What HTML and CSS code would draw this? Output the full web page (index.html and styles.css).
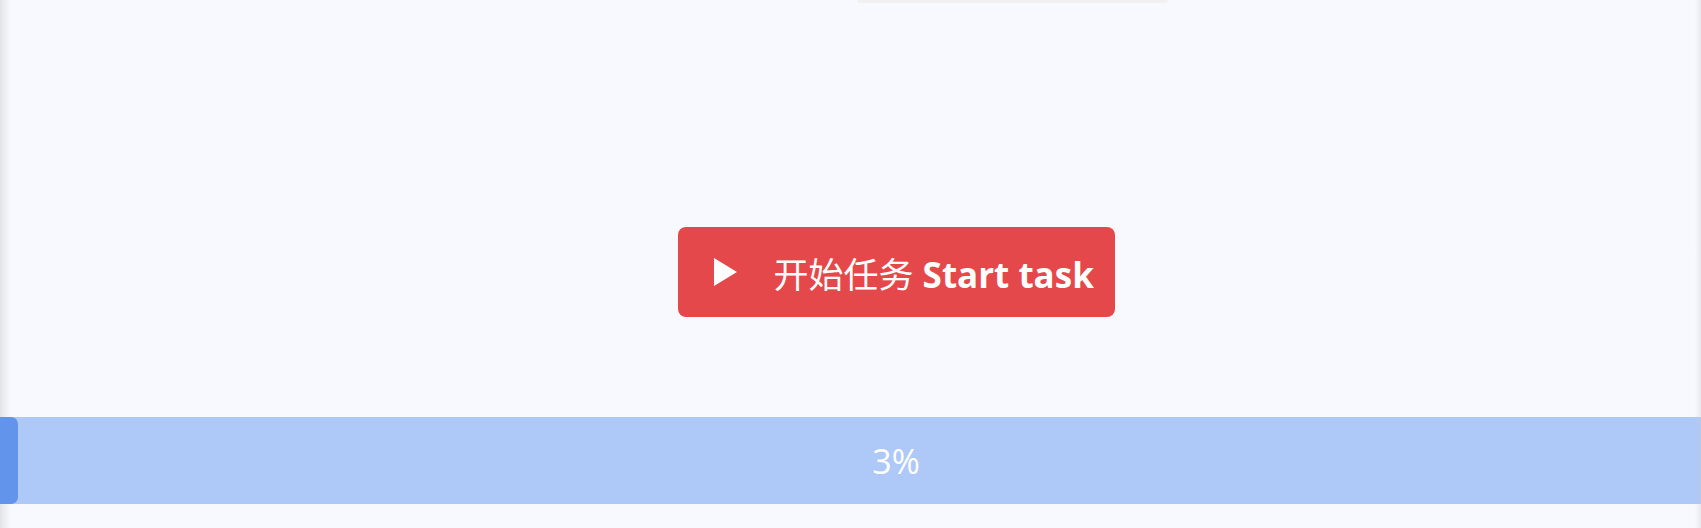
FILE: index.html
```html
<!DOCTYPE html>
<html lang="zh">
<head>
<meta charset="utf-8">
<title>Start task</title>
<link rel="stylesheet" href="styles.css">
</head>
<body>
<div class="page">
  <div class="top-stub"></div>
  <div class="action">
    <button class="start-btn" type="button">
      <svg class="play" width="23" height="28" viewBox="0 0 23 28"><polygon points="0,0 23,14 0,28" fill="#ffffff"/></svg>
      <span class="label"><span class="zh">开始任务</span> <span class="en">Start task</span></span>
    </button>
  </div>
  <div class="progress">
    <div class="progress-fill" style="width:18px"></div>
    <span class="progress-text">3%</span>
  </div>
</div>
<div class="edge-right"></div>
</body>
</html>
```
FILE: styles.css
```css
html, body {
  margin: 0;
  padding: 0;
  height: 100%;
  overflow: hidden;
}
body {
  background-color: #f8f9fe;
  background-image: linear-gradient(to right, #e2e3e8 0px, #eeeff3 5px, #f8f9fe 11px);
  background-repeat: no-repeat;
  font-family: "Open Sans", "Noto Sans CJK SC", sans-serif;
  position: relative;
}
.page {
  display: flex;
  flex-direction: column;
}
.top-stub {
  margin-left: 857px;
  width: 311px;
  height: 3px;
  background: #f1f1f1;
  border-radius: 0 0 8px 8px;
}
.action {
  display: flex;
  justify-content: center;
  padding-left: 91px;
  margin-top: 224px;
}
.start-btn {
  width: 437px;
  height: 90px;
  background: #e5484a;
  border: none;
  border-radius: 8px;
  display: flex;
  align-items: center;
  padding: 3px 0 0 36px;
  color: #ffffff;
  font-family: "Open Sans", "Noto Sans CJK SC", sans-serif;
  font-size: 35px;
  cursor: pointer;
}
.play {
  flex: none;
  margin-top: -3px;
  margin-right: 37px;
}
.label {
  white-space: nowrap;
  line-height: 1;
}
.zh {
  font-family: "Noto Sans CJK SC", sans-serif;
  font-weight: 400;
}
.en {
  font-weight: 700;
}
.progress {
  margin-top: 100px;
  height: 87px;
  padding-left: 91px;
  background: #aec8f7;
  position: relative;
  display: flex;
  align-items: center;
  justify-content: center;
}
.progress-fill {
  position: absolute;
  left: 0;
  top: 0;
  bottom: 0;
  background: #6394ec;
  border-radius: 0 7px 7px 0;
}
.progress-text {
  position: relative;
  color: #ffffff;
  font-size: 34px;
  line-height: 1;
}
.edge-right {
  position: absolute;
  top: 0;
  right: 0;
  width: 6px;
  height: 100%;
  background: linear-gradient(to right, rgba(200, 202, 210, 0), rgba(200, 202, 210, 0.35));
}
```
